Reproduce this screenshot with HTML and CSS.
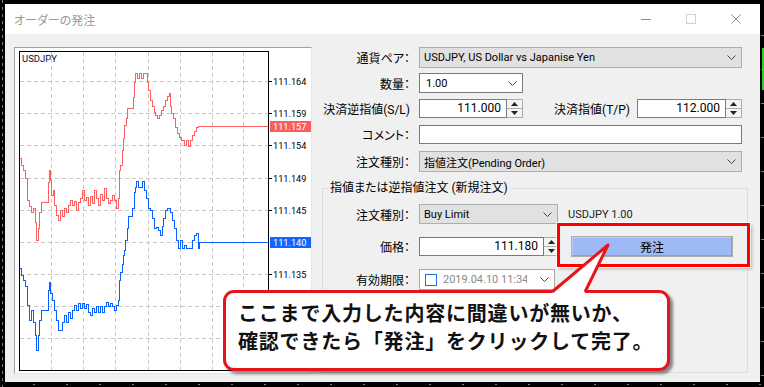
FILE: index.html
```html
<!DOCTYPE html>
<html lang="ja">
<head>
    <meta charset="UTF-8">
    <title>オーダーの発注</title>
    <link rel="stylesheet" href="styles.css">
</head>
<body>
    <div class="window">
        <div class="titlebar">
            <span class="title">オーダーの発注</span>
            <div class="controls">
                <svg width="10" height="10" viewBox="0 0 10 10"><line x1="0" y1="5.5" x2="10" y2="5.5" stroke="#8c8c8c"/></svg>
                <svg width="10" height="10" viewBox="0 0 10 10"><rect x="0.5" y="0.5" width="9" height="9" fill="none" stroke="#d0d0d0"/></svg>
                <svg width="10" height="10" viewBox="0 0 10 10"><path d="M0.5 0.5 L9.5 9.5 M9.5 0.5 L0.5 9.5" stroke="#8c8c8c"/></svg>
            </div>
        </div>

        <div class="content">
            <div class="chart-panel">
                <svg class="chart" width="296" height="325" viewBox="15 48 296 325" shape-rendering="crispEdges">
                    <g class="grid">
                        <line x1="20" y1="81.5" x2="268" y2="81.5"/>
                        <line x1="20" y1="113.5" x2="268" y2="113.5"/>
                        <line x1="20" y1="145.5" x2="268" y2="145.5"/>
                        <line x1="20" y1="178.5" x2="268" y2="178.5"/>
                        <line x1="20" y1="210.5" x2="268" y2="210.5"/>
                        <line x1="20" y1="242.5" x2="268" y2="242.5"/>
                        <line x1="20" y1="274.5" x2="268" y2="274.5"/>
                        <line x1="20" y1="306.5" x2="268" y2="306.5"/>
                        <line x1="20" y1="338.5" x2="268" y2="338.5"/>
                        <line x1="51.5" y1="52" x2="51.5" y2="370"/>
                        <line x1="83.5" y1="52" x2="83.5" y2="370"/>
                        <line x1="115.5" y1="52" x2="115.5" y2="370"/>
                        <line x1="148.5" y1="52" x2="148.5" y2="370"/>
                        <line x1="180.5" y1="52" x2="180.5" y2="370"/>
                        <line x1="212.5" y1="52" x2="212.5" y2="370"/>
                        <line x1="243.5" y1="52" x2="243.5" y2="370"/>
                    </g>
                    <g class="ticks">
                        <line x1="268" y1="81.5" x2="272" y2="81.5"/>
                        <line x1="268" y1="113.5" x2="272" y2="113.5"/>
                        <line x1="268" y1="145.5" x2="272" y2="145.5"/>
                        <line x1="268" y1="178.5" x2="272" y2="178.5"/>
                        <line x1="268" y1="210.5" x2="272" y2="210.5"/>
                        <line x1="268" y1="274.5" x2="272" y2="274.5"/>
                    </g>
                    <polyline class="ask" points="19,158 21,158 21,165 23,165 23,170 25,170 25,178 27,178 27,200 29,200 29,206 31,206 31,212 33,212 33,208 35,208 35,222 36,222 36,240 38,240 38,228 39,228 39,212 41,212 41,202 48,202 48,182 49,182 49,170 50,170 50,180 51,180 51,195 53,195 53,190 54,190 54,205 56,205 56,215 58,215 58,220 60,220 60,210 62,210 62,216 64,216 64,208 66,208 66,212 68,212 68,205 70,205 70,200 72,200 72,205 74,205 74,201 76,201 76,210 78,210 78,202 80,202 80,198 82,198 82,190 84,190 84,200 86,200 86,197 88,197 88,205 90,205 90,196 92,196 92,203 94,203 94,190 96,190 96,198 98,198 98,205 100,205 100,194 102,194 102,200 104,200 104,188 106,188 106,198 108,198 108,203 110,203 110,200 112,200 112,195 114,195 114,200 116,200 116,208 118,208 118,198 119,198 119,170 120,170 120,165 122,165 122,150 123,150 123,138 124,138 124,125 126,125 126,118 127,118 127,108 133,108 133,97 134,97 134,82 135,82 135,73 137,73 137,78 139,78 139,73 141,73 141,78 143,78 143,73 147,73 147,82 148,82 148,90 150,90 150,100 152,100 152,106 154,106 154,112 155,112 155,115 157,115 157,118 159,118 159,115 161,115 161,110 163,110 163,106 165,106 165,100 167,100 167,96 169,96 169,93 170,93 170,106 171,106 171,113 173,113 173,118 175,118 175,127 177,127 177,133 179,133 179,137 181,137 181,140 184,140 184,145 186,145 186,140 188,140 188,146 190,146 190,140 192,140 192,135 194,135 194,131 196,131 196,127 198,127 198,126 268,126"/>
                    <polyline class="bid" points="19,268 21,268 21,275 23,275 23,280 25,280 25,286 27,286 27,305 29,305 29,320 31,320 31,310 33,310 33,322 35,322 35,335 36,335 36,350 38,350 38,335 39,335 39,320 41,320 41,310 48,310 48,290 49,290 49,282 50,282 50,293 52,293 52,300 54,300 54,310 56,310 56,320 58,320 58,330 62,330 62,322 64,322 64,315 66,315 66,322 68,322 68,312 70,312 70,318 72,318 72,310 74,310 74,305 76,305 76,310 78,310 78,303 80,303 80,308 82,308 82,303 84,303 84,308 86,308 86,304 88,304 88,312 90,312 90,315 92,315 92,308 94,308 94,312 96,312 96,306 98,306 98,312 100,312 100,306 102,306 102,312 104,312 104,306 106,306 106,302 108,302 108,306 110,306 110,303 112,303 112,306 114,306 114,310 116,310 116,305 118,305 118,300 119,300 119,280 120,280 120,272 122,272 122,264 123,264 123,255 124,255 124,250 125,250 125,240 127,240 127,228 128,228 128,216 132,216 132,208 134,208 134,192 135,192 135,187 136,187 136,181 138,181 138,187 142,187 142,181 144,181 144,190 146,190 146,198 148,198 148,208 150,208 150,210 152,210 152,218 154,218 154,228 156,228 156,227 158,227 158,230 160,230 160,235 162,235 162,226 163,226 163,218 165,218 165,210 167,210 167,208 170,208 170,212 172,212 172,220 174,220 174,228 176,228 176,240 178,240 178,248 180,248 180,240 182,240 182,248 184,248 184,245 186,245 186,248 192,248 192,240 194,240 194,235 196,235 196,233 198,233 198,248 199,248 199,242 268,242"/>
                    <rect class="frame" x="19.5" y="51.5" width="249" height="319"/>
                    <text class="sym" x="22" y="62">USDJPY</text>
                    <g class="prices">
                        <text x="273" y="85">111.164</text>
                        <text x="273" y="117">111.159</text>
                        <text x="273" y="149">111.154</text>
                        <text x="273" y="182">111.149</text>
                        <text x="273" y="214">111.145</text>
                        <text x="273" y="278">111.135</text>
                    </g>
                    <rect x="270" y="121" width="41" height="11" fill="#f65f5f"/>
                    <text class="tag" x="273" y="130">111.157</text>
                    <rect x="270" y="237" width="41" height="11" fill="#1166ff"/>
                    <text class="tag" x="273" y="246">111.140</text>
                </svg>
            </div>

            <div class="form">
                <div class="row r1">
                    <span class="label">通貨ペア：</span>
                    <div class="select gray w-full">USDJPY, US Dollar vs Japanise Yen
                        <svg class="chev" width="9" height="5" viewBox="0 0 9 5"><polyline points="0.5,0.5 4.5,4.5 8.5,0.5"/></svg>
                    </div>
                </div>
                <div class="row r2">
                    <span class="label">数量：</span>
                    <div class="select white w-qty">1.00
                        <svg class="chev" width="9" height="5" viewBox="0 0 9 5"><polyline points="0.5,0.5 4.5,4.5 8.5,0.5"/></svg>
                    </div>
                </div>
                <div class="row r3">
                    <span class="label">決済逆指値(S/L)</span>
                    <div class="spin w-sl">
                        <span class="val">111.000</span>
                        <div class="arrows">
                            <span><svg width="7" height="4" viewBox="0 0 7 4"><polygon points="3.5,0 7,4 0,4"/></svg></span>
                            <span><svg width="7" height="4" viewBox="0 0 7 4"><polygon points="0,0 7,0 3.5,4"/></svg></span>
                        </div>
                    </div>
                    <span class="label-tp">決済指値(T/P)</span>
                    <div class="spin w-tp">
                        <span class="val">112.000</span>
                        <div class="arrows">
                            <span><svg width="7" height="4" viewBox="0 0 7 4"><polygon points="3.5,0 7,4 0,4"/></svg></span>
                            <span><svg width="7" height="4" viewBox="0 0 7 4"><polygon points="0,0 7,0 3.5,4"/></svg></span>
                        </div>
                    </div>
                </div>
                <div class="row r4">
                    <span class="label">コメント：</span>
                    <div class="textbox w-full"></div>
                </div>
                <div class="row r5">
                    <span class="label">注文種別：</span>
                    <div class="select gray w-full">指値注文(Pending Order)
                        <svg class="chev" width="9" height="5" viewBox="0 0 9 5"><polyline points="0.5,0.5 4.5,4.5 8.5,0.5"/></svg>
                    </div>
                </div>

                <fieldset class="group">
                    <legend>指値または逆指値注文 (新規注文)</legend>
                    <div class="row r6">
                        <span class="label">注文種別：</span>
                        <div class="select gray w-type">Buy Limit
                            <svg class="chev" width="9" height="5" viewBox="0 0 9 5"><polyline points="0.5,0.5 4.5,4.5 8.5,0.5"/></svg>
                        </div>
                        <span class="info">USDJPY 1.00</span>
                    </div>
                    <div class="row r7">
                        <span class="label">価格：</span>
                        <div class="spin w-price">
                            <span class="val">111.180</span>
                            <div class="arrows">
                                <span><svg width="7" height="4" viewBox="0 0 7 4"><polygon points="3.5,0 7,4 0,4"/></svg></span>
                                <span><svg width="7" height="4" viewBox="0 0 7 4"><polygon points="0,0 7,0 3.5,4"/></svg></span>
                            </div>
                        </div>
                        <button class="order-btn">発注</button>
                    </div>
                    <div class="row r8">
                        <span class="label">有効期限：</span>
                        <div class="datebox">
                            <span class="check"></span>
                            <span class="date">2019.04.10 11:34</span>
                            <svg class="chev" width="9" height="5" viewBox="0 0 9 5"><polyline points="0.5,0.5 4.5,4.5 8.5,0.5"/></svg>
                        </div>
                    </div>
                </fieldset>
            </div>
        </div>

        <!-- annotation drawn over the dialog -->
        <div class="highlight"></div>
        <div class="bubble">ここまで入力した内容に間違いが無いか、<br>確認できたら「発注」をクリックして完了。</div>
        <svg class="tail" width="70" height="56" viewBox="0 0 70 56">
            <polygon points="63,5 7,51 7,55 40,55 40,51" fill="#fff"/>
            <polyline points="7,52 63,5 40,52" fill="none" stroke="#e8141c" stroke-width="3" stroke-linejoin="round"/>
        </svg>
    </div>
</body>
</html>
```

FILE: styles.css
```css
html {
    background: #000;
}
body {
    margin: 0;
    padding: 4px 0 0 5px;
    height: 387px;
    box-sizing: border-box;
    font-family: Roboto, "Noto Sans CJK JP", sans-serif;
    font-feature-settings: "palt";
    color: #000;
    background:
        linear-gradient(#2bd12b, #2bd12b) 762px 48px / 2px 42px no-repeat,
        repeating-linear-gradient(to bottom, #7a7a7a 0 3px, transparent 3px 7px) 2px 0 / 1px 100% no-repeat,
        repeating-linear-gradient(to bottom, transparent 0 31px, #7a7a7a 31px 32px, transparent 32px 34px) 761px 4px / 3px 100% no-repeat,
        repeating-linear-gradient(to right, transparent 0 31px, #7a7a7a 31px 33px) 2px 384px / 100% 1px no-repeat,
        #000;
}
.window {
    position: relative;
    width: 755px;
    height: 378px;
    background: #f0f0f0;
}
.titlebar {
    height: 30px;
    background: #fff;
    display: flex;
    align-items: center;
    padding-left: 9px;
}
.title {
    font-size: 12px;
    color: #9a9a9a;
    font-family: "Noto Sans CJK JP", sans-serif;
}
.controls {
    margin-left: auto;
    display: flex;
    gap: 35px;
    padding-right: 19px;
}
.content {
    display: flex;
    gap: 8px;
    padding: 13px 0 0 9px;
}

/* chart */
.chart-panel {
    width: 298px;
    height: 327px;
    box-sizing: border-box;
    border: 1px solid;
    border-color: #a0a0a0 #e6e6e6 #e6e6e6 #a0a0a0;
    background: #fff;
}
.chart {
    display: block;
}
.grid line {
    stroke: #c8c8c8;
    stroke-dasharray: 4 3;
}
.ticks line {
    stroke: #000;
}
.frame {
    fill: none;
    stroke: #000;
}
.ask {
    fill: none;
    stroke: #ff5f5f;
}
.bid {
    fill: none;
    stroke: #0a60ff;
}
.sym {
    font-size: 9.5px;
    fill: #0c0c40;
}
.prices text {
    font-size: 9.2px;
    fill: #000;
}
.tag {
    font-size: 9.2px;
    fill: #fff;
}

/* form */
.form {
    width: 428px;
}
.row {
    display: flex;
    align-items: center;
    padding-right: 6px;
}
.label {
    width: 90px;
    margin-right: 9px;
    text-align: right;
    font-size: 12px;
    white-space: nowrap;
}
.r1 { height: 21px; margin-bottom: 5px; }
.r2 { height: 20px; margin-bottom: 5px; }
.r3 { height: 20px; margin-bottom: 7px; }
.r4 { height: 19px; margin-bottom: 7px; }
.r5 { height: 21px; }

.select {
    height: 100%;
    box-sizing: border-box;
    display: flex;
    align-items: center;
    padding: 0 5px 0 4px;
    font-size: 11px;
    white-space: nowrap;
}
.select.gray {
    background: #e1e1e1;
    border: 1px solid #adadad;
}
.select.white {
    background: #fff;
    border: 1px solid #7a7a7a;
    padding-left: 6px;
}
.chev {
    margin-left: auto;
    flex-shrink: 0;
}
.chev polyline {
    fill: none;
    stroke: #444;
}
.w-full { width: 323px; }
.w-qty { width: 104px; }
.w-type { width: 139px; }

.textbox {
    height: 100%;
    box-sizing: border-box;
    background: #fff;
    border: 1px solid #7a7a7a;
}

.spin {
    height: 19px;
    display: flex;
    font-size: 12px;
}
.spin .val {
    flex: 1;
    box-sizing: border-box;
    background: #fff;
    border: 1px solid #7a7a7a;
    text-align: right;
    padding-right: 5px;
    line-height: 17px;
}
.spin .arrows {
    width: 16px;
    box-sizing: border-box;
    border: 1px solid #adadad;
    border-left: none;
    background: #f4f4f4;
    display: flex;
    flex-direction: column;
}
.spin .arrows span {
    flex: 1;
    display: flex;
    align-items: center;
    justify-content: center;
}
.spin .arrows span + span {
    border-top: 1px solid #adadad;
}
.spin polygon {
    fill: #222;
}
.w-sl { width: 104px; }
.w-tp { width: 105px; }
.w-price { width: 141px; }
.label-tp {
    margin-left: auto;
    margin-right: 7px;
    font-size: 12px;
}

/* pending order group */
.group {
    margin: 8px 0 0 2px;
    padding: 0 0 82px 0;
    width: 426px;
    box-sizing: border-box;
    border: 1px solid #dcdcdc;
}
.group legend {
    margin-left: 5px;
    padding: 0 2px;
    font-size: 12px;
    line-height: 16px;
}
.group .label {
    width: 87px;
}
.r6 { height: 20px; margin-top: 8px; }
.r7 { height: 21px; margin-top: 12px; }
.r8 { height: 21px; margin-top: 12px; }
.info {
    margin-left: 10px;
    font-size: 11px;
    color: #222;
}
.order-btn {
    margin-left: 11px;
    width: 162px;
    height: 21px;
    border: 1px solid #adadad;
    background: #9db9f6;
    box-shadow: inset -1px -1px 0 #7f9fe8, inset 1px 1px 0 #b9cdf8;
    font-family: "Noto Sans CJK JP", sans-serif;
    font-size: 12px;
    color: #000;
    padding: 0;
}
.datebox {
    width: 136px;
    height: 100%;
    box-sizing: border-box;
    background: #fff;
    border: 1px solid #a8a8a8;
    display: flex;
    align-items: center;
    padding: 0 5px;
}
.check {
    width: 12px;
    height: 12px;
    box-sizing: border-box;
    border: 1px solid #1b6fd6;
    flex-shrink: 0;
}
.date {
    margin-left: 6px;
    width: 84px;
    overflow: hidden;
    white-space: nowrap;
    font-size: 11px;
    color: #8a8a8a;
}

/* annotation */
.highlight {
    position: absolute;
    left: 552px;
    top: 219px;
    width: 193px;
    height: 44px;
    box-sizing: border-box;
    border: 3px solid #ff0000;
    box-shadow: 0 0 0 1px rgba(255, 255, 255, 0.8), 2px 2px 3px rgba(0, 0, 0, 0.25);
}
.bubble {
    position: absolute;
    left: 218px;
    top: 286px;
    width: 447px;
    height: 81px;
    box-sizing: border-box;
    padding: 6px 0 0 12px;
    border: 3px solid #e8141c;
    border-radius: 11px;
    background: #fff;
    box-shadow: 3px 3px 3px rgba(0, 0, 0, 0.45);
    font-family: "Noto Sans CJK JP", sans-serif;
    font-feature-settings: normal;
    font-size: 20px;
    font-weight: bold;
    line-height: 28px;
    letter-spacing: 0.8px;
    color: #111;
    white-space: nowrap;
}
.tail {
    position: absolute;
    left: 540px;
    top: 236px;
}
```
